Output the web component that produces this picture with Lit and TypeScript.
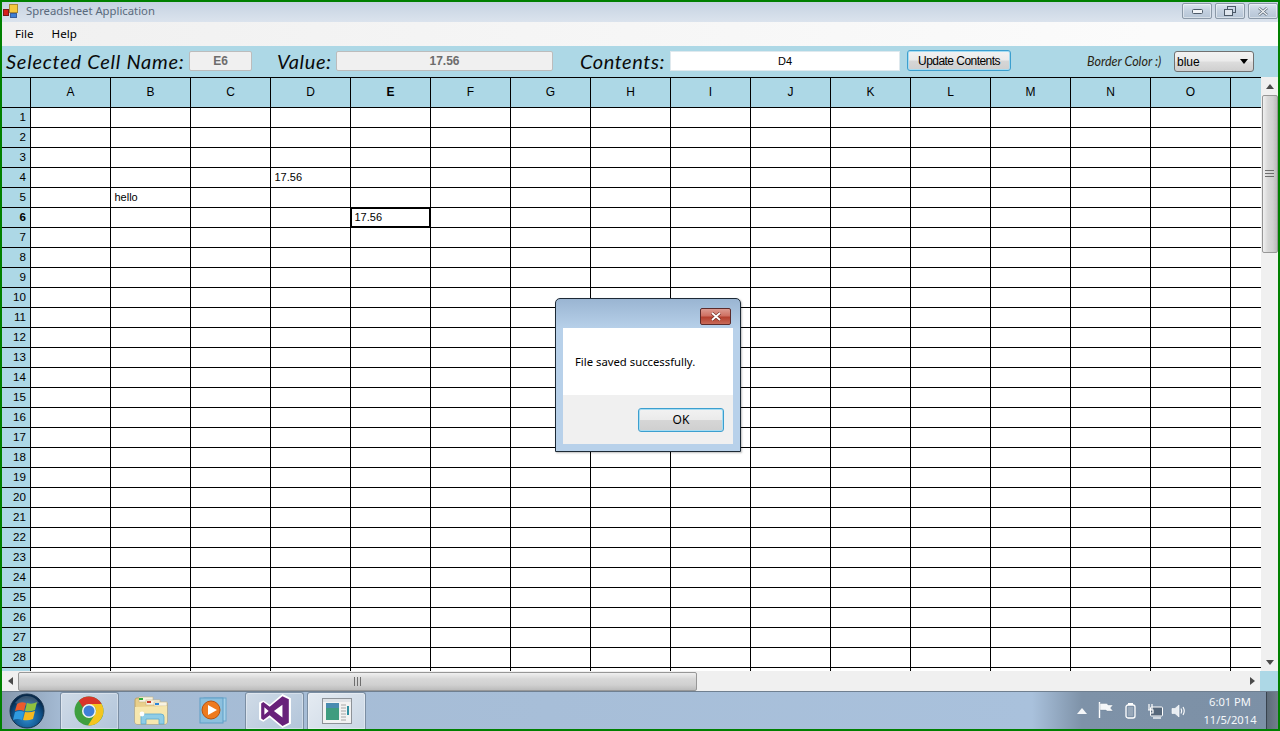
import { LitElement, html, css } from "lit";
import { customElement } from "lit/decorators.js";

const COLS = "ABCDEFGHIJKLMNO".split("");
const ROWS = Array.from({ length: 29 }, (_, i) => i + 1);
const DATA: Record<string, string> = { D4: "17.56", B5: "hello", E6: "17.56" };

@customElement("app-root")
export class AppRoot extends LitElement {
  static styles = css`
    :host {
      display: flex;
      flex-direction: column;
      position: relative;
      width: 1280px;
      height: 731px;
      box-sizing: border-box;
      border: 2px solid #008000;
      overflow: hidden;
      font-family: "Liberation Sans", Arial, sans-serif;
      font-size: 11px;
      color: #000;
      background: #add8e6;
    }
    svg { display: block; flex: none; }
    .title {
      height: 20px;
      flex: none;
      display: flex;
      align-items: center;
      background: linear-gradient(#c6d3e2, #dbe3ed);
      position: relative;
    }
    .title .ico { margin: 0 7px 2px 1px; }
    .title .name { font: 11.3px "Noto Sans", sans-serif; color: #5a6a7c; padding-bottom: 4px; }
    .wbtns { margin-left: auto; display: flex; gap: 3px; align-self: flex-start; margin-top: 1px; }
    .wbtn {
      width: 30px; height: 16px; box-sizing: border-box;
      border: 1px solid #8b99a8; border-radius: 2px;
      background: linear-gradient(#dbe4ee, #c3d0df 50%, #b6c5d6);
      display: flex; align-items: center; justify-content: center;
      box-shadow: inset 0 0 0 1px rgba(255,255,255,.45);
    }
    .menu {
      height: 24px; flex: none; box-sizing: border-box;
      display: flex; align-items: center;
      background: linear-gradient(90deg, #f0f0f0, #fbfbfb 90%);
      font: 11.6px "Noto Sans", sans-serif;
      padding: 0 0 2px 13px;
      gap: 18px;
    }
    .bar {
      height: 31px; flex: none; box-sizing: border-box;
      display: flex; align-items: flex-start;
      padding: 5px 0 0 4px;
      background: #add8e6;
    }
    .lbl {
      font: italic 20px "Lato", sans-serif;
      line-height: 21px;
      color: #0a0a0a;
      white-space: nowrap;
    }
    .lbl.l1 { width: 183px; letter-spacing: .75px; }
    .lbl.l2 { width: 59px; margin-left: 25px; letter-spacing: .6px; }
    .lbl.l3 { width: 90px; margin-left: 27px; letter-spacing: .55px; }
    .lbl.l4 {
      font-size: 12.5px; width: 87px; margin-left: 76px;
      color: #2a2413;
    }
    .ro {
      height: 20px; box-sizing: border-box;
      border: 1px solid #bcbcbc; border-radius: 2px;
      background: #f0f0f0;
      color: #6d6d6d; font-weight: bold; font-size: 12px;
      display: flex; align-items: center; justify-content: center;
    }
    .ro.r1 { width: 63px; }
    .ro.r2 { width: 217px; }
    .inp {
      width: 230px; height: 20px; box-sizing: border-box;
      border: 1px solid #dfe9ee; background: #fff;
      display: flex; align-items: center; justify-content: center;
    }
    .upd {
      width: 104px; height: 21px; margin: -1px 0 0 7px; box-sizing: border-box;
      border: 1px solid #3c9fcf; border-radius: 3px;
      background: linear-gradient(#f2f2f2, #ebebeb 48%, #d6d6d6 52%, #cfcfcf);
      box-shadow: inset 0 0 0 1px #a6dcf2;
      display: flex; align-items: center; justify-content: center;
      font-size: 12px; letter-spacing: -.55px;
    }
    .sel {
      width: 80px; height: 21px; box-sizing: border-box;
      border: 1px solid #707070; border-radius: 3px;
      background: linear-gradient(#f2f2f2, #ebebeb 48%, #ddd 52%, #cfcfcf);
      display: flex; align-items: center; justify-content: space-between;
      padding: 0 5px 0 2px; font-size: 12px;
    }
    .main { flex: 1; min-height: 0; display: flex; }
    .gridwrap { flex: 1; min-width: 0; overflow: hidden; border-top: 1px solid #000; background: #fff; }
    .grid {
      display: grid;
      grid-template-columns: 29px repeat(15, 80px) 30px;
      grid-template-rows: 30px;
      grid-auto-rows: 20px;
    }
    .c {
      box-sizing: border-box;
      border-right: 1px solid #000;
      border-bottom: 1px solid #000;
      display: flex; align-items: center;
      padding-left: 3.5px;
      position: relative;
      background: #fff;
      line-height: 1;
    }
    .c.end { border-right: 0; }
    .h { background: #add8e6; justify-content: center; padding: 0 0 2px; font-size: 12px; }
    .rh { background: #add8e6; justify-content: flex-end; padding: 0 4px 1px 0; font-size: 11.6px; }
    .b { font-weight: bold; }
    .cur::after {
      content: "";
      position: absolute;
      inset: -1px;
      border: 2px solid #000;
    }
    .vs {
      width: 17px; flex: none; background: #f0f0f0;
      display: flex; flex-direction: column; align-items: center;
      position: relative;
    }
    .vs .arr { height: 18px; display: flex; align-items: center; justify-content: center; flex: none; }
    .vs .th {
      width: 16px; height: 158px; box-sizing: border-box; flex: none;
      border: 1px solid #979797; border-radius: 2px;
      background: linear-gradient(90deg, #f0f0f0, #d8d8d8 35%, #d0d0d0 70%, #bcbcbc);
      display: flex; align-items: center; justify-content: center;
    }
    .vs .sp { flex: 1; }
    .hs { height: 20px; flex: none; display: flex; align-items: center; background: #f0f0f0; }
    .hs .arr { width: 16px; display: flex; align-items: center; justify-content: center; flex: none; }
    .hs .th {
      width: 679px; height: 19px; box-sizing: border-box; flex: none;
      border: 1px solid #979797; border-radius: 2px;
      background: linear-gradient(#f0f0f0, #d8d8d8 35%, #d0d0d0 70%, #bcbcbc);
      display: flex; align-items: center; justify-content: center;
    }
    .hs .sp { flex: 1; }
    .hs .corner { width: 18px; height: 100%; background: #add8e6; flex: none; }
    .task {
      height: 38px; flex: none; display: flex; align-items: stretch;
      background: linear-gradient(90deg, #8598ad, #a5bbd4 60px, #a9c1dc 1030px, #7e92a8 1080px, #7c90a6);
      border-top: 1px solid #6f7f90;
      box-sizing: border-box;
      position: relative;
    }
    .orb { width: 58px; display: flex; align-items: center; justify-content: center; flex: none; padding-right: 8px; box-sizing: border-box; }
    .tb {
      width: 59px; flex: none; display: flex; align-items: center; justify-content: center;
      box-sizing: border-box;
    }
    .tb.on {
      border: 1px solid #7b8ea3; border-bottom: 0; border-radius: 3px 3px 0 0;
      background: linear-gradient(135deg, #d0dbe7, #b2c5da);
      box-shadow: inset 0 0 0 1px rgba(255,255,255,.35);
    }
    .tb.chr { padding-right: 1px; }
    .tb.act { background: linear-gradient(135deg, #e5ebf2, #c9d6e4); margin-left: 3px; }
    .tb.flat { width: 63px; }
    .tray { margin-left: auto; display: flex; align-items: center; color: #fff; }
    .tray svg { margin-right: 11px; }
    .tray svg.net { margin-right: 8px; }
    .tray svg.vol { margin-right: 13px; }
    .clock {
      width: 60px; margin-right: 6px;
      text-align: center; font: 11.2px/18px "Noto Sans", sans-serif; color: #f4f7fa;
      white-space: nowrap;
    }
    .desk {
      width: 12px; align-self: stretch; flex: none;
      background: linear-gradient(90deg, #5d6b78, #727f8c);
      border-left: 1px solid #38434e;
      box-sizing: border-box;
    }
    .dlg {
      position: absolute;
      left: 553px; top: 296px;
      width: 186px; height: 154px; box-sizing: border-box;
      border: 1px solid #1d2a36;
      border-radius: 5px 5px 0 0;
      background: linear-gradient(#9ab5d2, #b8d1ea 20%, #b8d1ea);
      box-shadow: 1px 1px 2px rgba(0,0,0,.25);
      padding: 9px 7px 7px 7px;
      display: flex; flex-direction: column;
    }
    .dlg .x {
      width: 31px; height: 17px; box-sizing: border-box; align-self: flex-end; margin-right: 2px; flex: none;
      border: 1px solid #5c2b2b; border-radius: 2px;
      background: linear-gradient(#dc9a90, #cf7163 45%, #b4402f 55%, #c86a58);
      display: flex; align-items: center; justify-content: center;
    }
    .dlg .msg {
      margin-top: 3px; height: 67px; flex: none; box-sizing: border-box; background: #fff;
      padding-left: 12px; display: flex; align-items: center;
      font: 11.3px "Noto Sans", sans-serif;
    }
    .dlg .foot {
      flex: 1; background: #f0f0f0;
      display: flex; align-items: flex-start; justify-content: flex-end;
      padding: 13px 9px 0 0;
    }
    .dlg .ok {
      width: 86px; height: 24px; box-sizing: border-box;
      border: 1px solid #3c9fcf; border-radius: 3px;
      background: linear-gradient(#f2f2f2, #ebebeb 48%, #d6d6d6 52%, #cfcfcf);
      box-shadow: inset 0 0 0 1px #a6dcf2;
      display: flex; align-items: center; justify-content: center;
      font: 12px "Noto Sans", sans-serif; padding-bottom: 2px;
    }
  `;

  private winIcon() {
    return html`<svg width="16" height="16" viewBox="0 0 16 16" class="ico">
      <rect x="0.5" y="6.5" width="5" height="6" fill="#d8201c" stroke="#7a1a1a"/>
      <rect x="6.5" y="1.5" width="8" height="8" fill="#f6c83e" stroke="#a98a32"/>
      <rect x="7.5" y="10.5" width="6" height="4" fill="#3f7fd6" stroke="#3a5f9a"/>
    </svg>`;
  }

  private orb() {
    return html`<svg width="36" height="36" viewBox="0 0 36 36">
      <defs>
        <radialGradient id="o" cx="50%" cy="70%" r="60%">
          <stop offset="0" stop-color="#2f8fd0"/><stop offset=".7" stop-color="#0f4f86"/><stop offset="1" stop-color="#072a4c"/>
        </radialGradient>
      </defs>
      <circle cx="18" cy="18" r="17" fill="url(#o)" stroke="#17324d" stroke-width="1"/>
      <path d="M6 10 Q12 2 18 3 Q26 3 30 10 Q18 15 6 10Z" fill="#ffffff" opacity=".2"/>
      <path d="M8 11 Q12 8 17 10 L15 18 Q11 16 6 18Z" fill="#ec5a2c"/>
      <path d="M18 10 Q23 12 28 9 L26 17 Q21 19 16 18Z" fill="#8fc23f"/>
      <path d="M6 19 Q11 17 15 19 L13 27 Q9 25 4 27Z" fill="#2f9be0"/>
      <path d="M16 19 Q21 20 26 18 L24 26 Q19 28 14 27Z" fill="#f6b81e"/>
    </svg>`;
  }

  private chrome() {
    return html`<svg width="30" height="30" viewBox="0 0 30 30">
      <circle cx="15" cy="15" r="14.5" fill="#3f9f3f"/>
      <path d="M15 .5 A14.5 14.5 0 0 1 27.6 8 L15 8 A7 7 0 0 0 8.9 11.5 L4.7 4.8 A14.5 14.5 0 0 1 15 .5Z" fill="#d9352a"/>
      <path d="M27.6 8 A14.5 14.5 0 0 1 14 29.4 L20.6 19 A7 7 0 0 0 21 11 L15 8Z" fill="#f4c51f"/>
      <circle cx="15" cy="15" r="7" fill="#f4f4f4"/>
      <circle cx="15" cy="15" r="5.5" fill="#3f7fd8"/>
    </svg>`;
  }

  private folder() {
    return html`<svg width="34" height="32" viewBox="0 0 34 32">
      <path d="M1 5 L1 27 Q1 29 3 29 L31 29 Q33 29 33 27 L33 8 L17 8 L14 3 L3 3 Q1 3 1 5Z" fill="#e9cf8a" stroke="#bca468"/>
      <rect x="5" y="2" width="14" height="5" fill="#f7f3e3" stroke="#c9b580" stroke-width=".6"/>
      <rect x="5" y="3" width="4" height="2" fill="#2fae3c"/>
      <rect x="12" y="5" width="14" height="5" fill="#f7f3e3" stroke="#c9b580" stroke-width=".6"/>
      <rect x="13" y="6" width="4" height="2" fill="#c8382a"/>
      <rect x="20" y="7" width="13" height="4" fill="#f7f3e3" stroke="#c9b580" stroke-width=".6"/>
      <rect x="21" y="8" width="4" height="2" fill="#2a86d8"/>
      <path d="M1 12 L33 11 L33 27 Q33 29 31 29 L3 29 Q1 29 1 27Z" fill="#f6e7ae"/>
      <path d="M7 29 L7 22 Q7 19 10 19 L27 19 Q30 19 30 22 L30 29 L25 29 L25 24 L12 24 L12 29Z" fill="#8fcde6" stroke="#5aa8cf" stroke-width=".8"/>
      <circle cx="8" cy="19" r="2.4" fill="#ffffff"/>
    </svg>`;
  }

  private wmp() {
    return html`<svg width="30" height="28" viewBox="0 0 30 28">
      <rect x="5" y="1" width="22" height="23" fill="#a7d2ea" stroke="#6aa6cb"/>
      <rect x="1" y="1" width="23" height="25" fill="#8cc0de" stroke="#5f9ec6"/>
      <circle cx="12" cy="13" r="9" fill="#ee7a1e" stroke="#b9530f"/>
      <path d="M9 8 L18 13 L9 18Z" fill="#fff"/>
    </svg>`;
  }

  private vs() {
    return html`<svg width="34" height="34" viewBox="0 0 32 32">
      <path d="M23 0 L31 4 L31 28 L23 32 L11 22 L5 26 L1 24 L1 8 L5 6 L11 10Z" fill="#fff"/>
      <path d="M23 2 L29 5 L29 27 L23 30 L11 20 L5 24.5 L3 23 L3 9 L5 7.5 L11 12Z M23 10 L15 16 L23 22Z M6 12.5 L6 19.5 L10 16Z" fill="#68217a" fill-rule="evenodd"/>
    </svg>`;
  }

  private app() {
    return html`<svg width="30" height="26" viewBox="0 0 30 26">
      <rect x=".5" y=".5" width="29" height="25" fill="#f2f2f2" stroke="#8d9298"/>
      <rect x="1" y="1" width="28" height="3" fill="#dfe2e6"/>
      <rect x="4" y="5" width="13" height="17" fill="#3f9c7f"/>
      <rect x="4" y="5" width="13" height="5" fill="#4a8bb0"/>
      <path d="M19 7h5M19 10h5M19 13h5M19 16h5M19 19h5M19 22h5" stroke="#a6a6a6"/>
      <rect x="25" y="8" width="2" height="9" fill="#2f8fa0"/>
    </svg>`;
  }

  private tray() {
    return html`
      <svg width="10" height="6" viewBox="0 0 10 6"><path d="M5 0 L10 6 L0 6Z" fill="#f4f6f8"/></svg>
      <svg width="16" height="17" viewBox="0 0 16 17"><path d="M1.5 0 V16" stroke="#fff" stroke-width="1.4"/><path d="M2 1.5 H9 L10 3 H15 L12.5 6 L15 9 H9 L8 8 H2Z" fill="#fff" opacity=".92" stroke="#5f7288" stroke-width=".3"/></svg>
      <svg width="11" height="16" viewBox="0 0 11 16"><rect x="1" y="2" width="9" height="13" rx="2" fill="none" stroke="#fff" stroke-width="1.3"/><rect x="3" y="0" width="5" height="2" fill="#fff"/><rect x="3" y="4" width="5" height="9" fill="#fff" opacity=".2"/></svg>
      <svg class="net" width="16" height="16" viewBox="0 0 16 16"><rect x="3.5" y="4" width="12" height="9" rx="1" fill="#56677a" stroke="#fff"/><path d="M6 15h8" stroke="#fff" stroke-width="1.3"/><path d="M2 1v6M5 1v6M1 7h5v3H3" stroke="#fff" stroke-width="1.2" fill="none"/></svg>
      <svg class="vol" width="16" height="14" viewBox="0 0 16 14"><path d="M1 4.5 H4 L8 1 V13 L4 9.5 H1Z" fill="#e8edf2" stroke="#fff" stroke-width=".6"/><path d="M10 4.5 Q11.5 7 10 9.5 M12 3 Q14.5 7 12 11" stroke="#fff" stroke-width="1.1" fill="none"/></svg>
    `;
  }

  render() {
    const upArr = html`<svg width="8" height="5" viewBox="0 0 8 5"><path d="M4 0 L8 5 L0 5Z" fill="#4a4a4a"/></svg>`;
    const dnArr = html`<svg width="8" height="5" viewBox="0 0 8 5"><path d="M0 0 L8 0 L4 5Z" fill="#4a4a4a"/></svg>`;
    return html`
      <div class="title">
        ${this.winIcon()}
        <span class="name">Spreadsheet Application</span>
        <div class="wbtns">
          <div class="wbtn"><svg width="11" height="5" viewBox="0 0 11 5"><rect x=".5" y=".5" width="10" height="4" rx="1" fill="#f2f5f8" stroke="#4d5a68"/></svg></div>
          <div class="wbtn"><svg width="12" height="10" viewBox="0 0 12 10"><rect x="3.5" y=".5" width="8" height="6" fill="none" stroke="#4d5a68"/><rect x=".5" y="3.5" width="8" height="6" fill="#dfe6ee" stroke="#4d5a68"/></svg></div>
          <div class="wbtn"><svg width="12" height="9" viewBox="0 0 12 9"><path d="M2 1 L10 8 M10 1 L2 8" stroke="#5a6774" stroke-width="2.6"/><path d="M2 1 L10 8 M10 1 L2 8" stroke="#f2f5f8" stroke-width="1.2"/></svg></div>
        </div>
      </div>
      <div class="menu"><span>File</span><span>Help</span></div>
      <div class="bar">
        <span class="lbl l1">Selected Cell Name:</span>
        <div class="ro r1">E6</div>
        <span class="lbl l2">Value:</span>
        <div class="ro r2">17.56</div>
        <span class="lbl l3">Contents:</span>
        <div class="inp">D4</div>
        <div class="upd">Update Contents</div>
        <span class="lbl l4">Border Color :)</span>
        <div class="sel"><span>blue</span><svg width="8" height="5" viewBox="0 0 8 5"><path d="M0 0 L8 0 L4 5Z" fill="#000"/></svg></div>
      </div>
      <div class="main">
        <div class="gridwrap">
          <div class="grid">
            <div class="c h"></div>
            ${COLS.map((c) => html`<div class="c h ${c === "E" ? "b" : ""}">${c}</div>`)}
            <div class="c h end"></div>
            ${ROWS.map(
              (r) => html`
                <div class="c rh ${r === 6 ? "b" : ""}">${r === 29 ? "" : r}</div>
                ${COLS.map((c) => {
                  const k = c + r;
                  return html`<div class="c ${k === "E6" ? "cur" : ""}">${DATA[k] ?? ""}</div>`;
                })}
                <div class="c end"></div>
              `
            )}
          </div>
        </div>
        <div class="vs">
          <div class="arr">${upArr}</div>
          <div class="th"><svg width="9" height="8" viewBox="0 0 9 8"><path d="M0 .5h9M0 3.5h9M0 6.5h9" stroke="#6e6e6e"/></svg></div>
          <div class="sp"></div>
          <div class="arr">${dnArr}</div>
        </div>
      </div>
      <div class="hs">
        <div class="arr"><svg width="5" height="8" viewBox="0 0 5 8"><path d="M5 0 L5 8 L0 4Z" fill="#4a4a4a"/></svg></div>
        <div class="th"><svg width="8" height="9" viewBox="0 0 8 9"><path d="M.5 0v9M3.5 0v9M6.5 0v9" stroke="#6e6e6e"/></svg></div>
        <div class="sp"></div>
        <div class="arr"><svg width="5" height="8" viewBox="0 0 5 8"><path d="M0 0 L5 4 L0 8Z" fill="#4a4a4a"/></svg></div>
        <div class="corner"></div>
      </div>
      <div class="task">
        <div class="orb">${this.orb()}</div>
        <div class="tb on chr">${this.chrome()}</div>
        <div class="tb flat">${this.folder()}</div>
        <div class="tb flat">${this.wmp()}</div>
        <div class="tb on">${this.vs()}</div>
        <div class="tb on act">${this.app()}</div>
        <div class="tray">
          ${this.tray()}
          <div class="clock">6:01 PM<br />11/5/2014</div>
          <div class="desk"></div>
        </div>
      </div>
      <div class="dlg">
        <div class="x"><svg width="14" height="9" viewBox="0 0 14 9"><path d="M3 1 L11 8 M11 1 L3 8" stroke="#6b2a20" stroke-width="3"/><path d="M3 1 L11 8 M11 1 L3 8" stroke="#fff" stroke-width="1.8"/></svg></div>
        <div class="msg">File saved successfully.</div>
        <div class="foot"><div class="ok">OK</div></div>
      </div>
    `;
  }
}
